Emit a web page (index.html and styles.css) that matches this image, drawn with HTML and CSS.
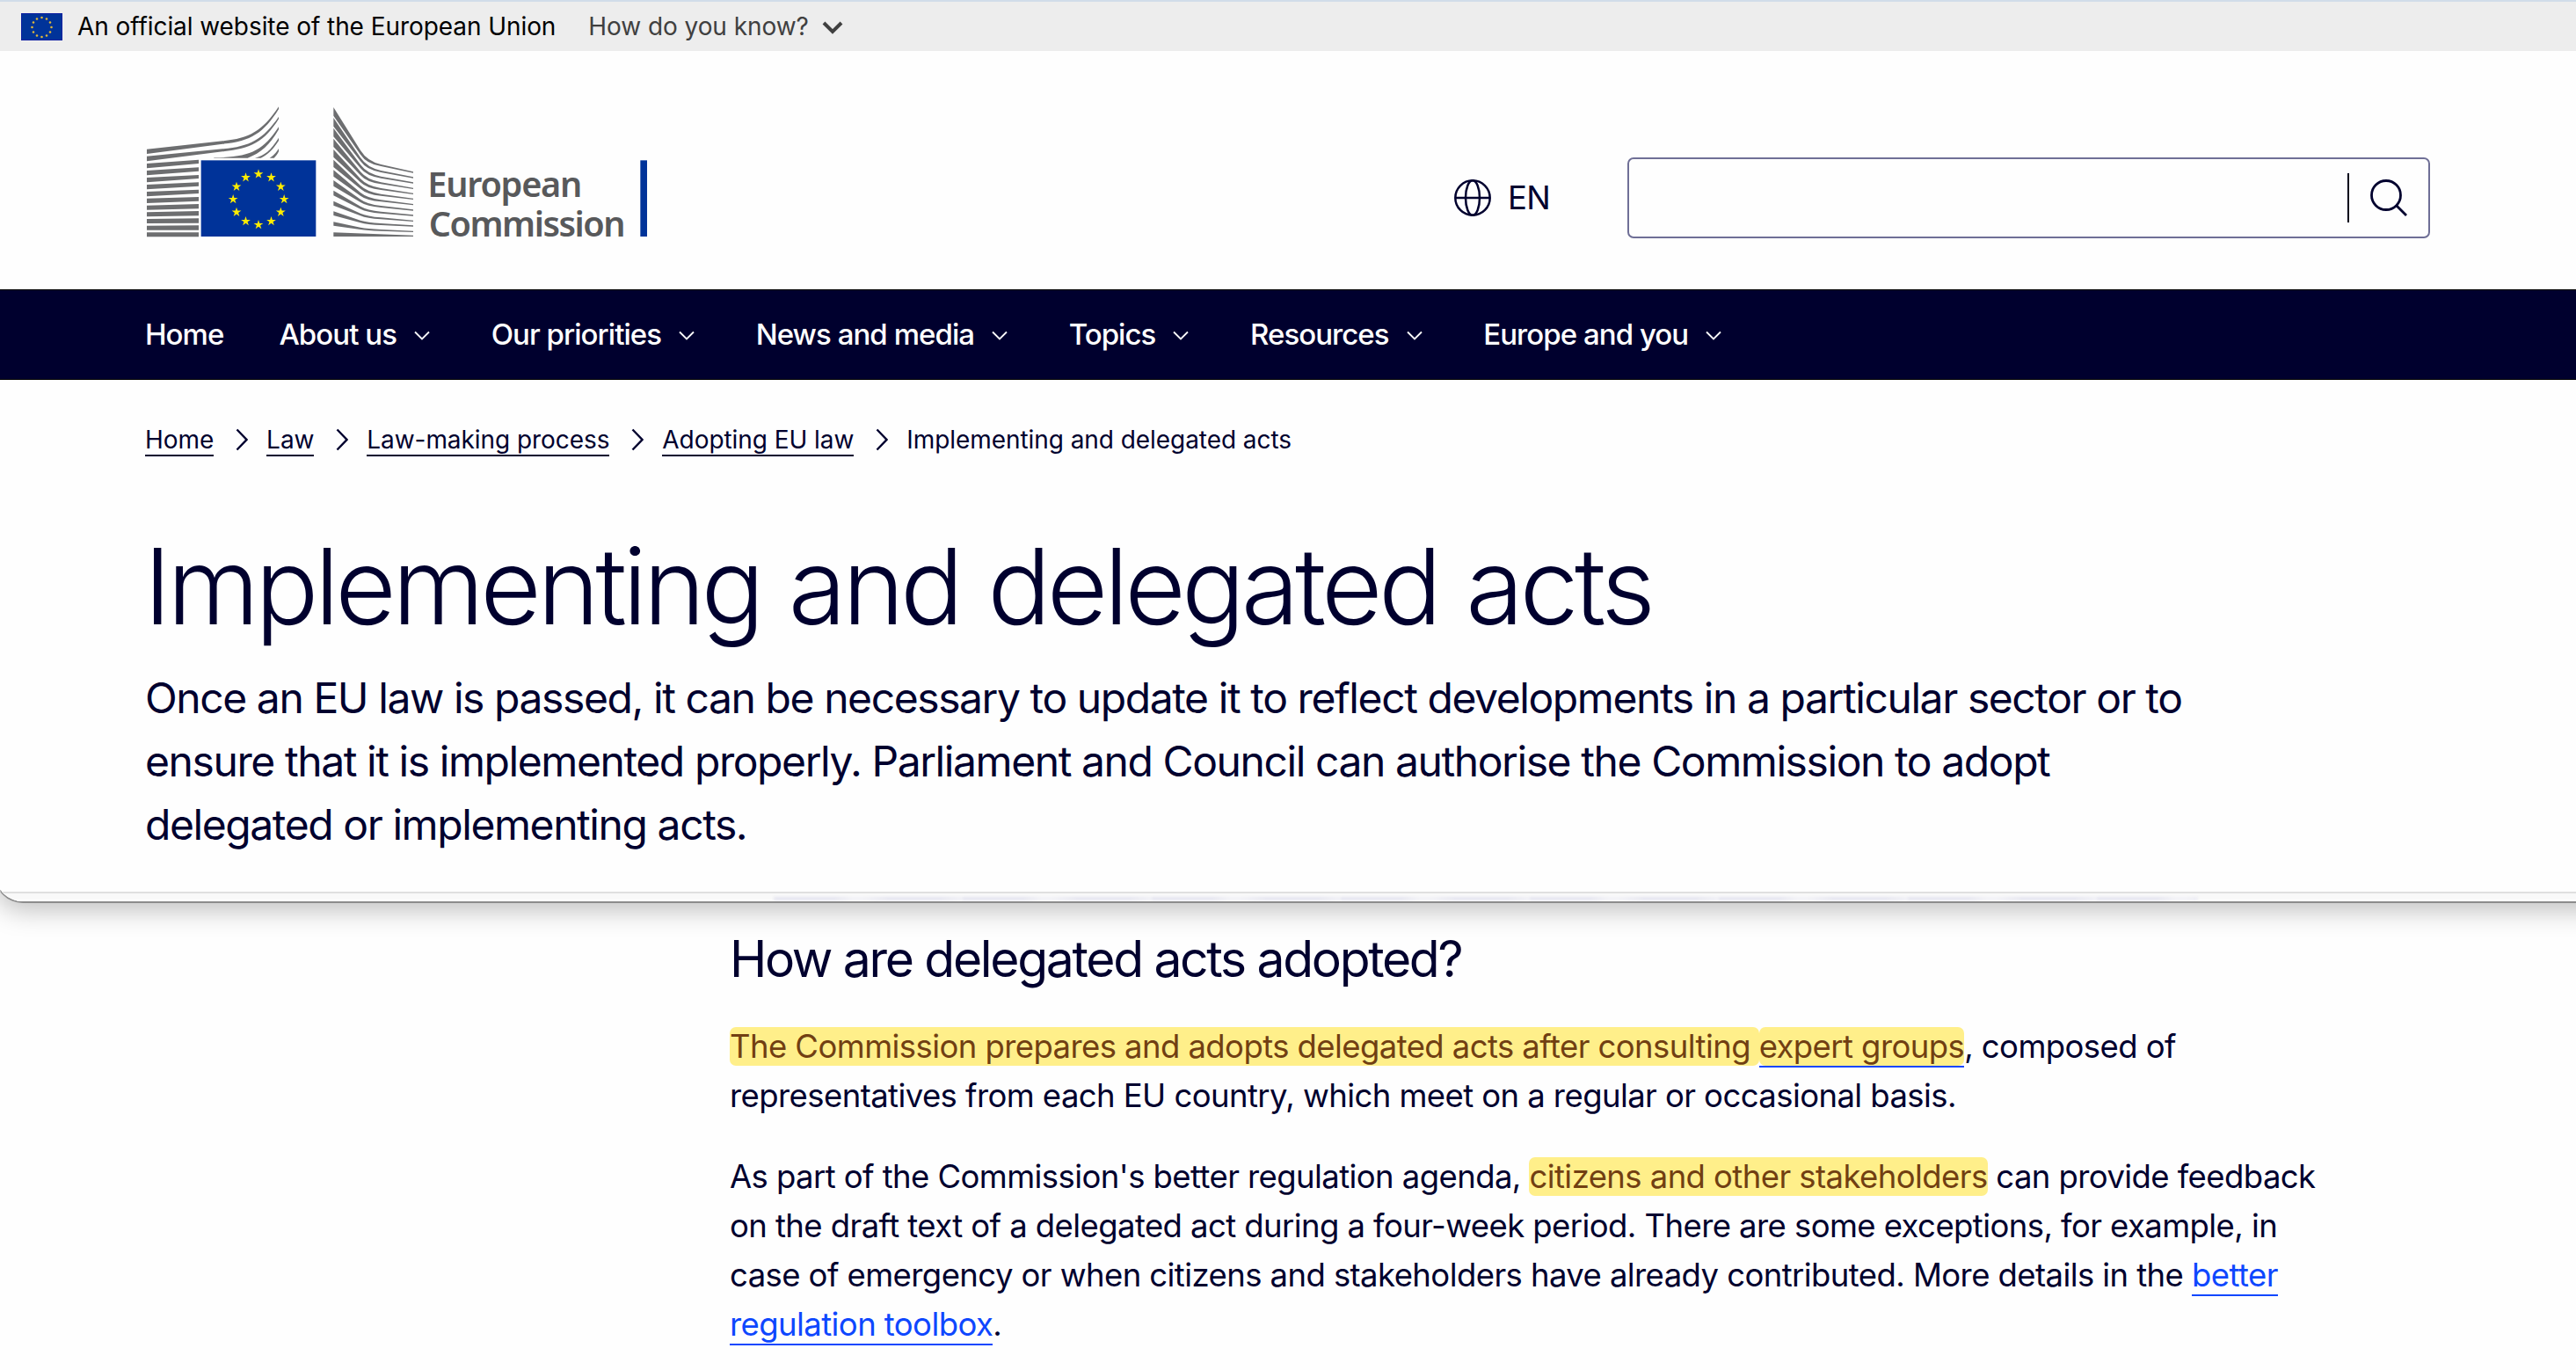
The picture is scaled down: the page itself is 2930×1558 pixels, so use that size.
FILE: index.html
```html
<!DOCTYPE html>
<html lang="en">
<head>
    <meta charset="UTF-8">
    <meta name="viewport" content="width=device-width, initial-scale=1.0">
    <title>Implementing and delegated acts - European Commission</title>
    <link rel="stylesheet" href="styles.css">
</head>
<body>
    <div class="panel">
        <div class="globan">
            <svg class="globan-flag" viewBox="0 0 47 31">
                <rect width="47" height="31" fill="#0a1fa0"/>
                <rect x="1" y="1" width="45" height="29" fill="#039"/>
                <g fill="#e0b83a">
                    <circle cx="23.500" cy="5" r="1.300"/>
                    <circle cx="29" cy="6.500" r="1.300"/>
                    <circle cx="33" cy="10.500" r="1.300"/>
                    <circle cx="34.500" cy="16" r="1.300"/>
                    <circle cx="33" cy="21.500" r="1.300"/>
                    <circle cx="29" cy="25.500" r="1.300"/>
                    <circle cx="23.500" cy="27" r="1.300"/>
                    <circle cx="18" cy="25.500" r="1.300"/>
                    <circle cx="14" cy="21.500" r="1.300"/>
                    <circle cx="12.500" cy="16" r="1.300"/>
                    <circle cx="14" cy="10.500" r="1.300"/>
                    <circle cx="18" cy="6.500" r="1.300"/>
                </g>
            </svg>
            <span class="globan-text">An official website of the European Union</span>
            <a class="globan-link" href="#">How do you know?</a>
            <svg class="globan-arrow" viewBox="0 0 24 16"><path d="M2 3l10 10L22 3" fill="none" stroke="#404040" stroke-width="4"/></svg>
        </div>

        <header class="site-header">
            <a class="logo" href="#">
                <svg width="600" height="170" viewBox="0 0 1800 510">
                    <defs>
                        <polygon id="star" points="0,-17 3.8,-5.3 16.2,-5.3 6.200,2 10,13.8 0,6.500 -10,13.8 -6.200,2 -16.2,-5.3 -3.8,-5.3"/>
                    </defs>
                    <!-- left wing -->
                    <g fill="#6d6e70">
                        <path d="M51 179L310 151C400 143 445 118 501 34V42C450 124 405 152 310 161L51 195z"/>
                        <path d="M51 203L310 178C400 170 448 146 501 68V76C452 154 405 178 310 187L51 220z"/>
                        <path d="M51 228L228 215V228L51 244z"/>
                        <path d="M280 208C400 206 446 188 501 103V112C470 165 440 192 395 209H280z"/>
                        <path d="M420 209C452 200 474 184 501 140V150C482 180 463 199 440 209z"/>
                        <path d="M470 209C482 202 490 194 501 177V187C495 198 492 203 485 209z"/>
                        <path d="M51 252L228 241V254L51 268z"/>
                        <path d="M51 276L228 267V279L51 292z"/>
                        <path d="M51 300L228 292V305L51 316z"/>
                        <path d="M51 324L228 317V330L51 340z"/>
                        <path d="M51 347L228 342V356L51 363z"/>
                        <path d="M51 371L228 366V382L51 386z"/>
                        <path d="M51 394L228 390V406L51 409z"/>
                        <path d="M51 417L228 415V431L51 432z"/>
                        <path d="M51 440L228 439V455L51 455z"/>
                        <path d="M51 463H228V478H51z"/>
                    </g>
                    <!-- right wing -->
                    <g fill="#6d6e70">
                        <path d="M688 36L780 183Q803 220 850 231L960 256V260L850 237Q801 229 780 197L688 65z"/>
                        <path d="M688 72L780 208Q803 242 850 252L960 274V278L850 258Q801 250 780 220L688 101z"/>
                        <path d="M688 107L780 232Q803 263 850 272L960 292V296L850 278Q801 271 780 244L688 136z"/>
                        <path d="M688 143L780 256Q803 284 850 292L960 311V315L850 298Q801 292 780 268L688 171z"/>
                        <path d="M688 180L780 280Q803 305 850 312L960 329V333L850 318Q801 313 780 292L688 206z"/>
                        <path d="M688 215L780 303Q803 325 850 332L960 347V351L850 338Q801 333 780 314L688 240z"/>
                        <path d="M688 250L780 327Q803 346 850 352L960 366V370L850 358Q801 354 780 338L688 272z"/>
                        <path d="M688 285L780 350Q803 367 850 372L960 385V389L850 378Q801 374 780 360L688 305z"/>
                        <path d="M688 320L780 374Q803 387 850 392L960 403V407L850 398Q801 394 780 383L688 337z"/>
                        <path d="M688 356L780 398Q803 408 850 412L960 422V426L850 418Q801 415 780 406L688 371z"/>
                        <path d="M688 391L780 422Q803 429 850 432L960 439V443L850 438Q801 436 780 430L688 405z"/>
                        <path d="M688 427L780 446Q803 450 850 453L960 458V462L850 458Q801 457 780 453L688 440z"/>
                        <path d="M688 463L960 473V477H688z"/>
                    </g>
                    <rect x="236" y="217" width="392" height="260" fill="#039"/>
                    <g fill="#ffed00">
                        <use href="#star" x="432" y="264"/>
                        <use href="#star" x="475.500" y="275.500"/>
                        <use href="#star" x="508" y="307"/>
                        <use href="#star" x="519.500" y="350"/>
                        <use href="#star" x="508" y="394"/>
                        <use href="#star" x="475.500" y="425"/>
                        <use href="#star" x="432" y="437"/>
                        <use href="#star" x="388.500" y="425"/>
                        <use href="#star" x="357" y="394"/>
                        <use href="#star" x="345.500" y="350"/>
                        <use href="#star" x="357" y="307"/>
                        <use href="#star" x="388.500" y="275.500"/>
                    </g>
                    <text class="logo-text" x="1009" y="341" textLength="528">European</text>
                    <text class="logo-text" x="1013" y="477" textLength="672">Commission</text>
                    <rect x="1735" y="217" width="23" height="260" fill="#039"/>
                </svg>
            </a>
            <a class="lang" href="#">
                <svg width="42" height="42" viewBox="0 0 42 42" fill="none" stroke="#00002e" stroke-width="2.500">
                    <circle cx="21" cy="21" r="19.700"/>
                    <ellipse cx="21" cy="21" rx="8" ry="19.700"/>
                    <path d="M1 21h40"/>
                </svg>
                <span>EN</span>
            </a>
            <form class="search">
                <input type="text" class="search-input" aria-label="Search">
                <span class="search-line"></span>
                <svg class="search-icon" width="44" height="44" viewBox="0 0 44 44" fill="none" stroke="#00002e" stroke-width="2.800">
                    <circle cx="19" cy="19" r="16.500"/>
                    <path d="M30.500 30.500L42 42"/>
                </svg>
            </form>
        </header>

        <nav class="menu">
            <a class="menu-home" href="#">Home</a>
            <a href="#">About us<svg viewBox="0 0 18 12"><path d="M1 1.500l8 8 8-8"/></svg></a>
            <a href="#">Our priorities<svg viewBox="0 0 18 12"><path d="M1 1.500l8 8 8-8"/></svg></a>
            <a href="#">News and media<svg viewBox="0 0 18 12"><path d="M1 1.500l8 8 8-8"/></svg></a>
            <a href="#">Topics<svg viewBox="0 0 18 12"><path d="M1 1.500l8 8 8-8"/></svg></a>
            <a href="#">Resources<svg viewBox="0 0 18 12"><path d="M1 1.500l8 8 8-8"/></svg></a>
            <a href="#">Europe and you<svg viewBox="0 0 18 12"><path d="M1 1.500l8 8 8-8"/></svg></a>
        </nav>

        <div class="page-header">
            <div class="breadcrumb">
                <a href="#">Home</a>
                <svg viewBox="0 0 14 26"><path d="M1.500 1.500L12.500 13 1.500 24.500"/></svg>
                <a href="#">Law</a>
                <svg viewBox="0 0 14 26"><path d="M1.500 1.500L12.500 13 1.500 24.500"/></svg>
                <a href="#">Law-making process</a>
                <svg viewBox="0 0 14 26"><path d="M1.500 1.500L12.500 13 1.500 24.500"/></svg>
                <a href="#">Adopting EU law</a>
                <svg viewBox="0 0 14 26"><path d="M1.500 1.500L12.500 13 1.500 24.500"/></svg>
                <span>Implementing and delegated acts</span>
            </div>
            <h1>Implementing and delegated acts</h1>
            <p class="intro">Once an EU law is passed, it can be necessary to update it to reflect developments in a particular sector or to<br>
                ensure that it is implemented properly. Parliament and Council can authorise the Commission to adopt<br>
                delegated or implementing acts.</p>
        </div>
        <div class="panel-edge"><div class="panel-smudge"></div></div>
    </div>

    <main class="content">
        <h2>How are delegated acts adopted?</h2>
        <p><mark>The Commission prepares and adopts delegated acts after consulting </mark><a href="#"><mark>expert groups</mark></a>, composed of<br>
            representatives from each EU country, which meet on a regular or occasional basis.</p>
        <p>As part of the Commission's better regulation agenda, <mark>citizens and other stakeholders</mark> can provide feedback<br>
            on the draft text of a delegated act during a four-week period. There are some exceptions, for example, in<br>
            case of emergency or when citizens and stakeholders have already contributed. More details in the <a href="#">better<br>
            regulation toolbox</a>.</p>
    </main>
</body>
</html>
```

FILE: styles.css
```css
* {
    box-sizing: border-box;
}
body {
    font-family: Inter, "Liberation Sans", sans-serif;
    background-color: #fefefe;
    color: #00002e;
    margin: 0;
    height: 1558px;
    overflow: hidden;
}
a {
    color: inherit;
    text-decoration: none;
}
.panel {
    height: 1027px;
    margin-left: -6px;
    margin-right: -40px;
    padding-left: 6px;
    background-color: #fefefe;
    border-bottom: 2px solid #8c8c8c;
    border-left: 1px solid #b0b0b0;
    border-radius: 0 0 0 32px;
    box-shadow: 0 8px 30px rgba(0, 0, 0, 0.25);
    overflow: hidden;
}
.globan {
    display: flex;
    align-items: center;
    height: 58px;
    margin-left: -6px;
    padding: 0 0 0 29px;
    background-color: #ededed;
    border-top: 2px solid #d1dce9;
    font-size: 28px;
    letter-spacing: -0.07px;
}
.globan-flag {
    width: 47px;
    height: 31px;
    margin-right: 17px;
}
.globan-text {
    color: #000;
    margin-right: 37px;
}
.globan-link {
    color: #404040;
}
.globan-arrow {
    width: 24px;
    height: 16px;
    margin: 1px 0 0 15px;
}

/* header */
.site-header {
    display: flex;
    align-items: flex-start;
    height: 271px;
    padding: 52px 0 0 149px;
}
.logo-text {
    font-family: "Noto Sans", "Open Sans", sans-serif;
    font-size: 119px;
    font-weight: 600;
    fill: #58595b;
}
.lang {
    display: flex;
    align-items: center;
    gap: 19px;
    width: 197px;
    height: 42px;
    margin: 94px 0 0 904px;
    font-size: 36.5px;
    letter-spacing: -0.8px;
}
.search {
    display: flex;
    align-items: center;
    width: 913px;
    height: 92px;
    margin-top: 69px;
    border: 2px solid #6f6f96;
    border-radius: 7px;
}
.search-input {
    width: 817px;
    height: 80px;
    border: none;
    background: none;
    outline: none;
}
.search-line {
    width: 2px;
    height: 56px;
    background-color: #00001a;
    margin-right: 23px;
}

/* main menu */
.menu {
    display: flex;
    align-items: center;
    height: 103px;
    margin-left: -6px;
    padding: 0 0 2px 170px;
    background-color: #00002e;
    border-top: 1px solid #000;
    border-bottom: 1px solid #000;
    color: #fff;
    font-size: 33px;
    font-weight: 500;
    letter-spacing: -0.95px;
}
.menu a {
    display: flex;
    align-items: center;
    margin-right: 69.6px;
    white-space: nowrap;
}
.menu .menu-home {
    margin-right: 63px;
}
.menu svg {
    width: 18px;
    height: 12px;
    margin: 4px 0 0 20px;
    fill: none;
    stroke: #fff;
    stroke-width: 1.8;
}

.page-header {
    height: 582px;
    padding: 47px 0 0 164px;
}
.breadcrumb {
    display: flex;
    height: 42px;
    font-size: 28px;
    line-height: 42px;
    letter-spacing: -0.06px;
}
.breadcrumb a {
    height: 40px;
    border-bottom: 2px solid #00002e;
}
.breadcrumb svg {
    width: 14px;
    height: 26px;
    margin: 8px 21px 0 24.9px;
    fill: none;
    stroke: #00002e;
    stroke-width: 2.4;
}
h1 {
    margin: 76px 0 21px -1.5px;
    font-size: 120px;
    line-height: 140px;
    font-weight: 300;
    letter-spacing: -4.65px;
    word-spacing: 2.5px;
    white-space: nowrap;
}
.intro {
    margin: 0;
    font-size: 48px;
    line-height: 72px;
    letter-spacing: -1.42px;
    white-space: nowrap;
}
.panel-edge {
    height: 11px;
    margin-left: -6px;
    border-top: 2px solid #e0e0e0;
    background-color: #f9f9f9;
    border-bottom: 2px solid #fff;
}
.panel-smudge {
    width: 1620px;
    height: 4px;
    margin-left: 885px;
    position: relative;
    top: 4px;
    background: repeating-linear-gradient(90deg, #e6e6f0 0 70px, #f2f2f7 90px 100px, #e6e6f0 130px 190px, #f0f0f6 215px);
    filter: blur(1.5px);
}

/* article */
.content {
    padding: 28px 0 0 830px;
    font-size: 36.5px;
    line-height: 56px;
    letter-spacing: -0.582px;
    white-space: nowrap;
}
.content h2 {
    margin: 0 0 35px;
    font-size: 57px;
    line-height: 72px;
    font-weight: 400;
    letter-spacing: -2.33px;
}
.content p {
    margin: 0 0 36px;
}
.content a {
    color: #0e47fe;
    border-bottom: 2px solid #0e47fe;
}
mark {
    background-color: #ffef8a;
    color: #713f12;
    border-radius: 7px;
}
```
